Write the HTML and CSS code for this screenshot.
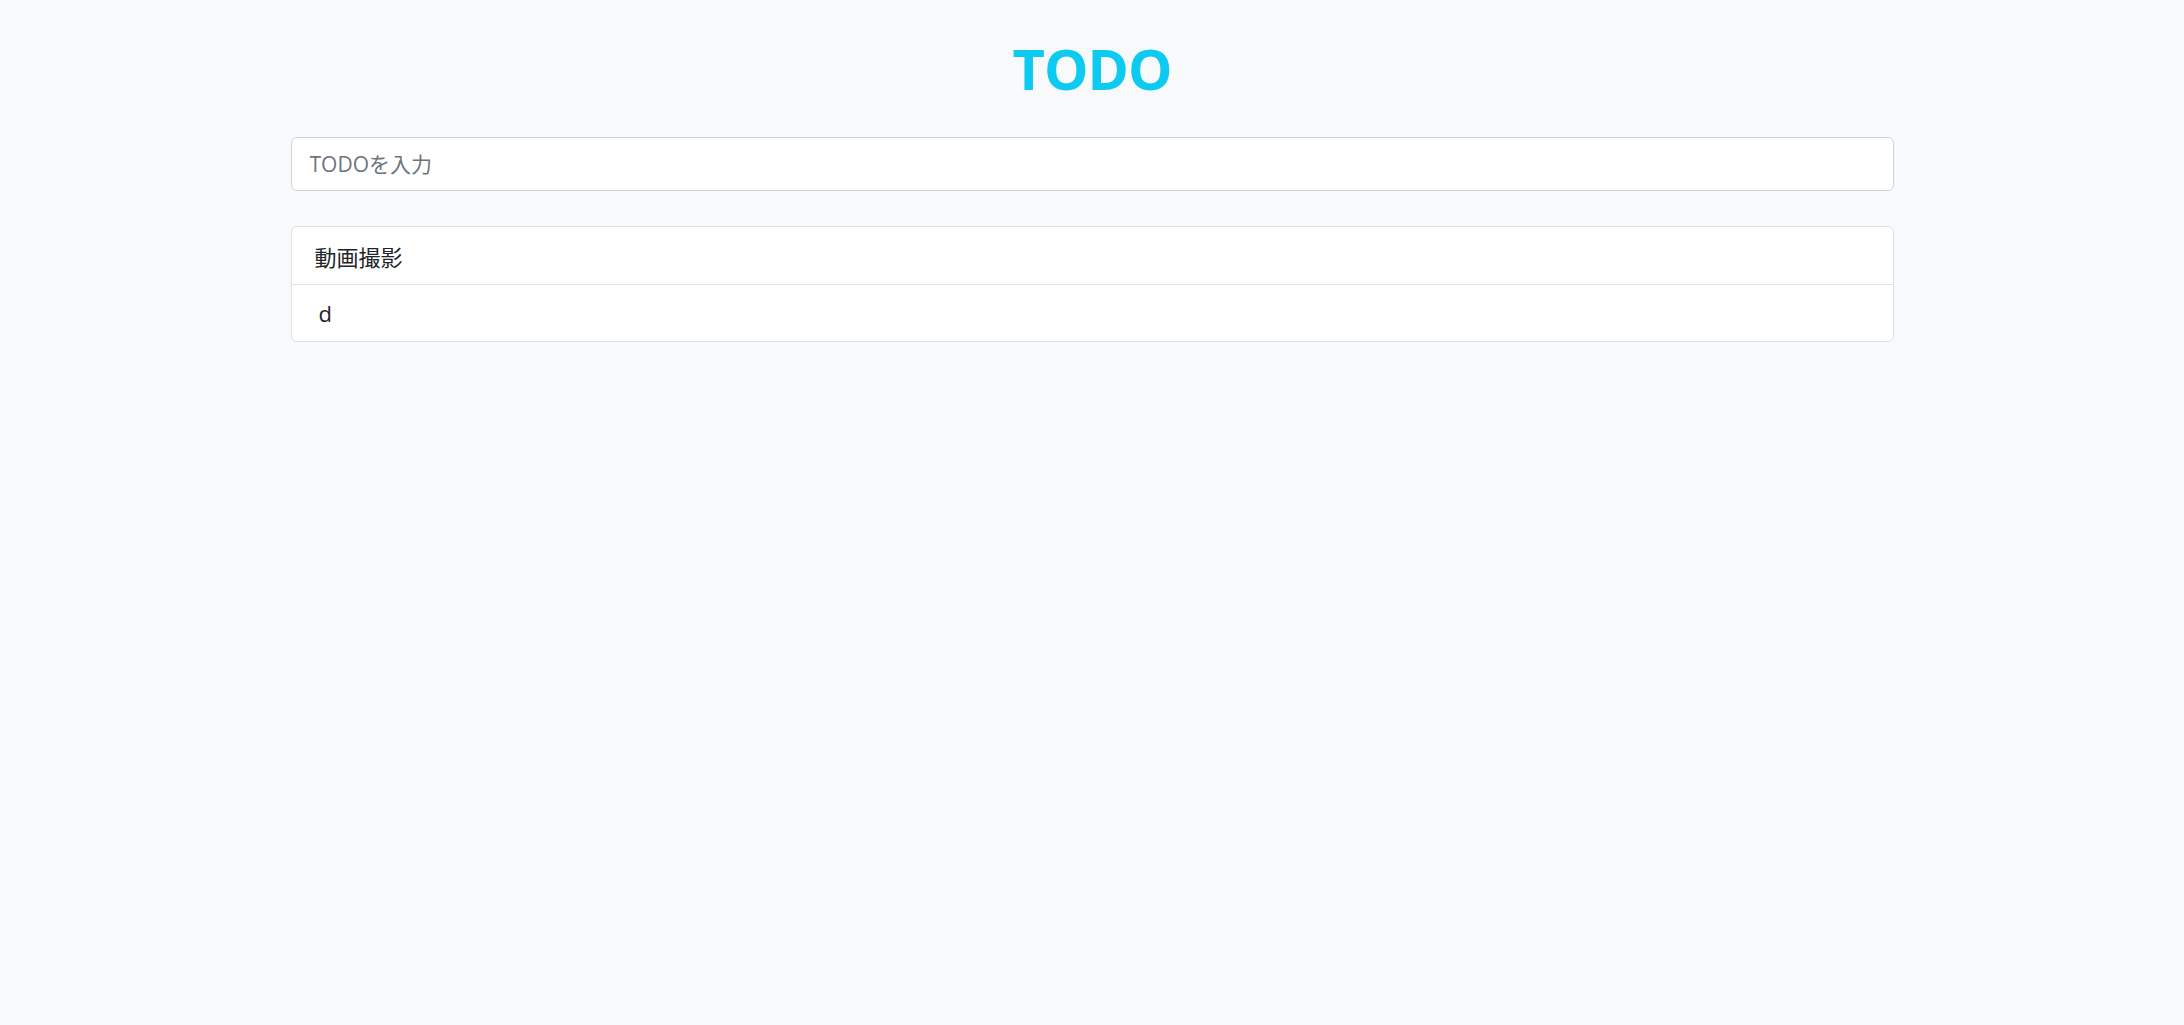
FILE: index.html
```html
<!DOCTYPE html>
<html lang="ja">
<head>
<meta charset="utf-8">
<title>TODO</title>
<link rel="stylesheet" href="styles.css">
</head>
<body>
<main class="app">
  <h1 class="title">TODO</h1>
  <input class="todo-input" type="text" placeholder="TODOを入力">
  <ul class="todo-list">
    <li class="todo-item">動画撮影</li>
    <li class="todo-item todo-item--latin">d</li>
  </ul>
</main>
</body>
</html>
```

FILE: styles.css
```css
html, body {
  margin: 0;
  padding: 0;
  background: #f8f9fa;
}
body {
  font-family: "Open Sans", "Noto Sans CJK JP", sans-serif;
  color: #212529;
  min-height: 100vh;
}
.app {
  width: 1603px;
  margin: 0 auto;
  padding-top: 35px;
  display: flex;
  flex-direction: column;
}
.title {
  margin: 0;
  text-align: center;
  font-size: 56px;
  line-height: 67px;
  font-weight: 700;
  letter-spacing: -1px;
  color: #0dcaf0;
}
.todo-input {
  margin-top: 35px;
  box-sizing: border-box;
  height: 54px;
  width: 100%;
  padding: 0 18px;
  border: 1px solid #ced4da;
  border-radius: 6px;
  background: #fff;
  font-family: "Open Sans", "Noto Sans CJK JP", sans-serif;
  font-size: 21px;
  color: #212529;
  outline: none;
}
.todo-input::placeholder {
  color: #6c757d;
}
.todo-list {
  list-style: none;
  margin: 35px 0 0;
  padding: 0;
  border: 1px solid #dee2e6;
  border-radius: 6px;
  background: #fff;
}
.todo-item {
  box-sizing: border-box;
  height: 57px;
  display: flex;
  align-items: center;
  padding: 0 23px;
  font-size: 22px;
  color: #212529;
}
.todo-item + .todo-item {
  border-top: 1px solid #dee2e6;
}
.todo-item--latin {
  padding-left: 27px;
}
```
